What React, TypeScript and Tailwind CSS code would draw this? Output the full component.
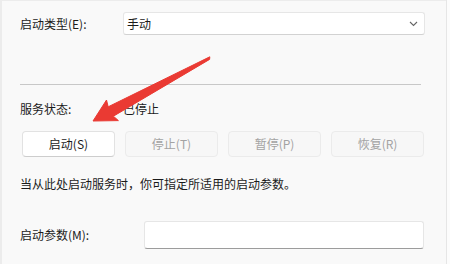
import React from "react";

const font = { fontFamily: '"Noto Sans CJK SC", "Noto Sans", sans-serif' };

const buttons = [
  { label: "启动(S)", enabled: true },
  { label: "停止(T)", enabled: false },
  { label: "暂停(P)", enabled: false },
  { label: "恢复(R)", enabled: false },
];

// red callout arrow pointing at the start button
function Arrow() {
  return (
    <svg className="pointer-events-none absolute left-0 top-0" width="450" height="264" viewBox="0 0 450 264">
      <polygon
        points="93,121 106.5,100 108.2,106.8 209.8,56.8 209.6,59.4 113.4,116.2 118.4,120.6"
        fill="#ea3a33"
        stroke="#ea3a33"
        strokeWidth="1"
        strokeLinejoin="round"
      />
    </svg>
  );
}

export default function App() {
  return (
    <div className="relative flex h-[264px] w-[450px] overflow-hidden bg-[#f9f9f9] text-[12px] leading-4 text-[#1b1b1b]" style={font}>
      <div className="flex flex-1 flex-col border-l-2 border-t border-[#ececec] pl-[18px]">
        {/* startup type */}
        <div className="mt-[11px] flex h-[23px] items-center">
          <span className="w-[103px]">启动类型(E):</span>
          <div className="flex h-[23px] w-[302px] items-center justify-between rounded-[3px] border border-[#e6e6e6] border-b-[#d2d2d2] bg-white pl-[3px] pr-[6px]">
            <span>手动</span>
            <svg width="9" height="6" viewBox="0 0 9 6">
              <path d="M1 1 L4.5 4.5 L8 1" fill="none" stroke="#666" strokeWidth="1.1" />
            </svg>
          </div>
        </div>

        <div className="mt-[49px] h-px w-[401px] bg-[#c8c8c8]" />

        {/* status */}
        <div className="mt-[16px] flex">
          <span className="w-[103px]">服务状态:</span>
          <span>已停止</span>
        </div>

        <div className="ml-[2px] mt-[14px] flex gap-[10px]">
          {buttons.map((b) => (
            <div
              key={b.label}
              className={
                b.enabled
                  ? "flex h-[26px] w-[93px] items-center justify-center rounded-[4px] border border-[#e2e2e2] border-b-[#cdcdcd] bg-white text-[#1b1b1b]"
                  : "flex h-[26px] w-[93px] items-center justify-center rounded-[4px] border border-[#ebebeb] bg-[#f7f7f7] text-[#a3a3a3]"
              }
            >
              {b.label}
            </div>
          ))}
        </div>

        <p className="mt-[19px]">当从此处启动服务时，你可指定所适用的启动参数。</p>

        {/* start parameters */}
        <div className="mt-[29px] flex items-center">
          <span className="w-[124px]">启动参数(M):</span>
          <div className="h-[28px] w-[280px] rounded-[3px] border border-[#e6e6e6] border-b-[#9c9c9c] bg-white" />
        </div>
      </div>
      <div className="w-[4px] border-l border-[#e6e6e6] bg-[#fcfcfc]" />
      <Arrow />
    </div>
  );
}
